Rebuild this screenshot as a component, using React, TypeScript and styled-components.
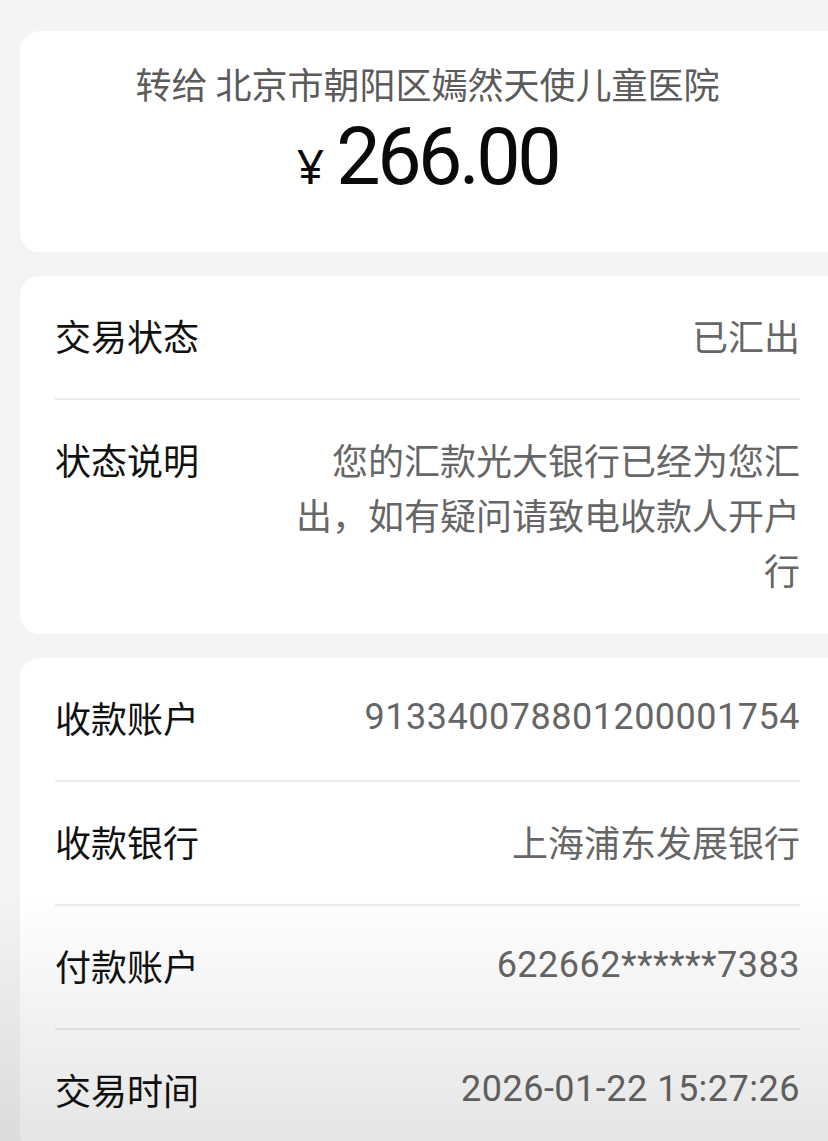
import React from 'react'
import styled, { createGlobalStyle } from 'styled-components'

const GlobalStyle = createGlobalStyle`
  html, body {
    margin: 0;
    padding: 0;
    background: #f4f4f4;
    overflow: hidden;
  }
  body {
    font-family: 'Noto Sans CJK SC', 'Noto Sans', sans-serif;
  }
`

const Page = styled.div`
  position: relative;
  width: 828px;
  height: 1141px;
  overflow: hidden;
  box-sizing: border-box;
  padding: 31px 0 0 20px;

  display: flex;
  flex-direction: column;
  gap: 24px;
`

const Card = styled.section`
  flex-shrink: 0;
  background: #ffffff;
  border-radius: 20px 0 0 20px;
  padding: 0 28px 0 35px;
`

const Header = styled(Card)`
  height: 221px;
  box-sizing: border-box;
  padding-top: 27px;

  display: flex;
  flex-direction: column;
  align-items: center;
`

const Payee = styled.div`
  font-size: 36px;
  line-height: 50px;
  color: #5b5b5b;
  white-space: nowrap;
`

const Amount = styled.div`
  display: flex;
  align-items: baseline;
  gap: 12px;
  margin-top: 4px;
  color: #0a0a0a;
`

const Currency = styled.span`
  font-family: 'Noto Sans', sans-serif;
  font-size: 48px;
  line-height: 1;
`

const Figure = styled.span`
  font-family: Roboto, 'Noto Sans', sans-serif;
  font-size: 79px;
  line-height: 90px;
  letter-spacing: -3.5px;
`

const Row = styled.div<{ $divider?: boolean }>`
  display: flex;
  justify-content: space-between;
  align-items: flex-start;
  gap: 40px;
  padding: 32px 0 35px;
  border-bottom: 2px solid ${props => (props.$divider ? '#ececec' : 'transparent')};
  font-size: 36px;
  line-height: 55px;
`

const Label = styled.div`
  flex-shrink: 0;
  color: #111111;
  white-space: nowrap;
`

const Value = styled.div<{ $digits?: boolean }>`
  max-width: 512px;
  text-align: right;
  color: #666666;
  font-family: ${props =>
    props.$digits ? "Roboto, 'Noto Sans CJK SC', sans-serif" : "'Noto Sans CJK SC', sans-serif"};
  letter-spacing: ${props => (props.$digits ? '0.5px' : '0')};
`

const Shade = styled.div`
  position: absolute;
  left: 0;
  right: 0;
  bottom: 0;
  height: 250px;
  pointer-events: none;
  background: linear-gradient(to bottom, rgba(0, 0, 0, 0), rgba(0, 0, 0, 0.1));
`

interface Item {
  label: string
  value: string
  digits?: boolean
}

const statusItems: Item[] = [
  { label: '交易状态', value: '已汇出' },
  { label: '状态说明', value: '您的汇款光大银行已经为您汇出，如有疑问请致电收款人开户行' },
]

const detailItems: Item[] = [
  { label: '收款账户', value: '913340078801200001754', digits: true },
  { label: '收款银行', value: '上海浦东发展银行' },
  { label: '付款账户', value: '622662******7383', digits: true },
  { label: '交易时间', value: '2026-01-22 15:27:26', digits: true },
]

function InfoCard({ items }: { items: Item[] }) {
  return (
    <Card>
      {items.map((item, i) => (
        <Row key={item.label} $divider={i < items.length - 1}>
          <Label>{item.label}</Label>
          <Value $digits={item.digits}>{item.value}</Value>
        </Row>
      ))}
    </Card>
  )
}

export default function App() {
  return (
    <>
      <GlobalStyle />
      <Page>
        <Header>
          <Payee>转给 北京市朝阳区嫣然天使儿童医院</Payee>
          <Amount>
            <Currency>¥</Currency>
            <Figure>266.00</Figure>
          </Amount>
        </Header>
        <InfoCard items={statusItems} />
        <InfoCard items={detailItems} />
        <Shade />
      </Page>
    </>
  )
}
